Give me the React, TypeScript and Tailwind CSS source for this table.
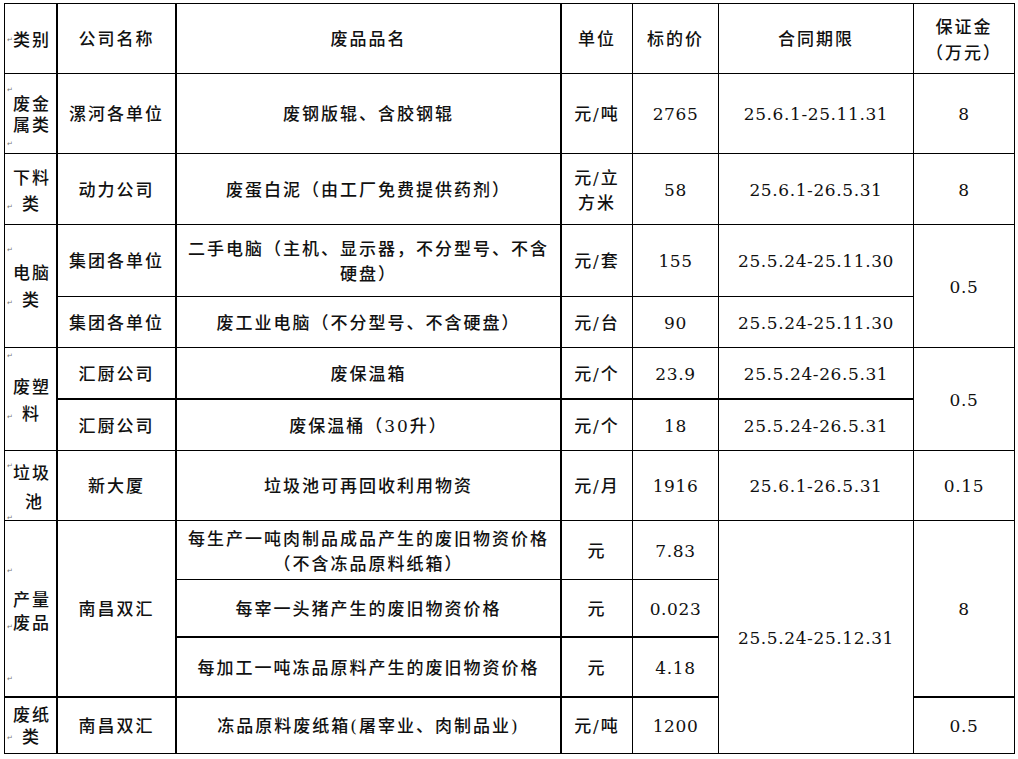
import clsx from "clsx"

const Mark = ({ className }: { className?: string }) => (
  <span
    className={clsx(
      "inline-block w-[6px] font-['DejaVu_Sans',sans-serif] text-[7px] leading-[8px] font-normal tracking-normal text-[#777]",
      className,
    )}
  >
    ↵
  </span>
)

function Cell({
  children,
  className,
  num,
}: {
  children: React.ReactNode
  className?: string
  num?: boolean
}) {
  return (
    <div
      className={clsx(
        "flex flex-col items-center justify-center pt-[3px] text-center border-solid border-black text-[17px] text-[#111]",
        num ? "tracking-[0.6px]" : "tracking-[2px] font-medium",
        className,
      )}
    >
      {children}
    </div>
  )
}

// first column: left aligned, lines placed by hand like the Word source
function Side({ children, className }: { children: React.ReactNode; className?: string }) {
  return (
    <div
      className={clsx(
        "flex flex-col items-start border-r-2 border-solid border-black pl-[2px] text-[17px] font-medium leading-[21px] tracking-[2px] text-[#111] overflow-hidden",
        className,
      )}
    >
      {children}
    </div>
  )
}

export default function App() {
  return (
    <div className="min-h-screen bg-white pl-[4px] pt-[3px] font-['DejaVu_Serif','Noto_Sans_CJK_SC',serif]">
      <div className="grid w-fit grid-cols-[53px_119px_385px_71px_86px_195px_101px] grid-rows-[70px_80px_71px_72px_51px_52px_51px_70px_59px_58px_60px_56px] border-l border-t border-solid border-black">
        {/* header */}
        <Side className="justify-center border-b pt-[3px]">
          <div className="flex items-center">
            <Mark />
            <span>类别</span>
          </div>
        </Side>
        <Cell className="border-r-2 border-b">公司名称</Cell>
        <Cell className="border-r-2 border-b">废品品名</Cell>
        <Cell className="border-r border-b">单位</Cell>
        <Cell className="border-r border-b">标的价</Cell>
        <Cell className="border-r border-b">合同期限</Cell>
        <Cell className="border-r border-b leading-[26px]">
          <span>保证金</span>
          <span>（万元）</span>
        </Cell>

        {/* 废金属类 */}
        <Side className="border-b pt-[12px]">
          <Mark />
          <span className="ml-[6px]">废金</span>
          <span className="ml-[6px]">属类</span>
          <Mark className="mt-[4px]" />
        </Side>
        <Cell className="border-r-2 border-b">漯河各单位</Cell>
        <Cell className="border-r-2 border-b">废钢版辊、含胶钢辊</Cell>
        <Cell className="border-r border-b">元/吨</Cell>
        <Cell num className="border-r border-b">2765</Cell>
        <Cell num className="border-r border-b">25.6.1-25.11.31</Cell>
        <Cell num className="border-r border-b">8</Cell>

        {/* 下料类 */}
        <Side className="border-b pt-[14px]">
          <span className="ml-[6px]">下料</span>
          <div className="mt-[5px] flex items-end">
            <Mark className="mb-[4px]" />
            <span className="ml-[9px]">类</span>
          </div>
        </Side>
        <Cell className="border-r-2 border-b">动力公司</Cell>
        <Cell className="border-r-2 border-b">废蛋白泥（由工厂免费提供药剂）</Cell>
        <Cell className="border-r border-b leading-[25px]">
          <span>元/立</span>
          <span>方米</span>
        </Cell>
        <Cell num className="border-r border-b">58</Cell>
        <Cell num className="border-r border-b">25.6.1-26.5.31</Cell>
        <Cell num className="border-r border-b">8</Cell>

        {/* 电脑类 */}
        <Side className="row-span-2 border-b pt-[21px]">
          <Mark />
          <span className="mt-[9px] ml-[6px]">电脑</span>
          <div className="mt-[6px] flex items-end">
            <Mark className="mb-[4px]" />
            <span className="ml-[9px]">类</span>
          </div>
        </Side>
        <Cell className="border-r-2 border-b">集团各单位</Cell>
        <Cell className="border-r-2 border-b leading-[25px]">
          <span>二手电脑（主机、显示器，不分型号、不含</span>
          <span>硬盘）</span>
        </Cell>
        <Cell className="border-r border-b">元/套</Cell>
        <Cell num className="border-r border-b">155</Cell>
        <Cell num className="border-r border-b">25.5.24-25.11.30</Cell>
        <Cell num className="row-span-2 border-r border-b">0.5</Cell>

        <Cell className="border-r-2 border-b">集团各单位</Cell>
        <Cell className="border-r-2 border-b">废工业电脑（不分型号、不含硬盘）</Cell>
        <Cell className="border-r border-b">元/台</Cell>
        <Cell num className="border-r border-b">90</Cell>
        <Cell num className="border-r border-b">25.5.24-25.11.30</Cell>

        {/* 废塑料 */}
        <Side className="row-span-2 border-b pt-[4px]">
          <Mark />
          <span className="mt-[17px] ml-[6px]">废塑</span>
          <div className="mt-[6px] flex items-end">
            <Mark className="mb-[4px]" />
            <span className="ml-[9px]">料</span>
          </div>
        </Side>
        <Cell className="border-r-2 border-b-2">汇厨公司</Cell>
        <Cell className="border-r-2 border-b-2">废保温箱</Cell>
        <Cell className="border-r border-b-2">元/个</Cell>
        <Cell num className="border-r border-b-2">23.9</Cell>
        <Cell num className="border-r border-b-2">25.5.24-26.5.31</Cell>
        <Cell num className="row-span-2 border-r border-b">0.5</Cell>

        <Cell className="border-r-2 border-b">汇厨公司</Cell>
        <Cell className="border-r-2 border-b">废保温桶（30升）</Cell>
        <Cell className="border-r border-b">元/个</Cell>
        <Cell num className="border-r border-b">18</Cell>
        <Cell num className="border-r border-b">25.5.24-26.5.31</Cell>

        {/* 垃圾池 */}
        <Side className="border-b pt-[12px]">
          <div className="flex items-start">
            <Mark className="-mt-[1px]" />
            <span>垃圾</span>
          </div>
          <span className="mt-[8px] ml-[18px]">池</span>
          <Mark className="mt-[1px] leading-[6px]" />
        </Side>
        <Cell className="border-r-2 border-b">新大厦</Cell>
        <Cell className="border-r-2 border-b">垃圾池可再回收利用物资</Cell>
        <Cell className="border-r border-b">元/月</Cell>
        <Cell num className="border-r border-b">1916</Cell>
        <Cell num className="border-r border-b">25.6.1-26.5.31</Cell>
        <Cell num className="border-r border-b">0.15</Cell>

        {/* 产量废品 */}
        <Side className="row-span-3 border-b-2 pt-[46px]">
          <Mark />
          <span className="mt-[15px] ml-[6px]">产量</span>
          <div className="mt-[2px] flex items-end">
            <Mark className="mb-[3px]" />
            <span>废品</span>
          </div>
          <Mark className="mt-[41px]" />
        </Side>
        <Cell className="row-span-3 border-r-2 border-b-2">南昌双汇</Cell>
        <Cell className="border-r-2 border-b leading-[25px]">
          <span>每生产一吨肉制品成品产生的废旧物资价格</span>
          <span>（不含冻品原料纸箱）</span>
        </Cell>
        <Cell className="border-r border-b">元</Cell>
        <Cell num className="border-r border-b">7.83</Cell>
        <Cell num className="row-span-4 border-r border-b">25.5.24-25.12.31</Cell>
        <Cell num className="row-span-3 border-r border-b-2">8</Cell>

        <Cell className="border-r-2 border-b-2">每宰一头猪产生的废旧物资价格</Cell>
        <Cell className="border-r border-b-2">元</Cell>
        <Cell num className="border-r border-b-2">0.023</Cell>

        <Cell className="border-r-2 border-b-2">每加工一吨冻品原料产生的废旧物资价格</Cell>
        <Cell className="border-r border-b-2">元</Cell>
        <Cell num className="border-r border-b-2">4.18</Cell>

        {/* 废纸类 */}
        <Side className="border-b pt-[7px]">
          <span className="ml-[6px]">废纸</span>
          <div className="mt-[1px] flex items-center">
            <Mark />
            <span className="ml-[9px]">类</span>
          </div>
        </Side>
        <Cell className="border-r-2 border-b">南昌双汇</Cell>
        <Cell className="border-r-2 border-b">冻品原料废纸箱(屠宰业、肉制品业)</Cell>
        <Cell className="border-r border-b">元/吨</Cell>
        <Cell num className="border-r border-b">1200</Cell>
        <Cell num className="border-r border-b">0.5</Cell>
      </div>
    </div>
  )
}
